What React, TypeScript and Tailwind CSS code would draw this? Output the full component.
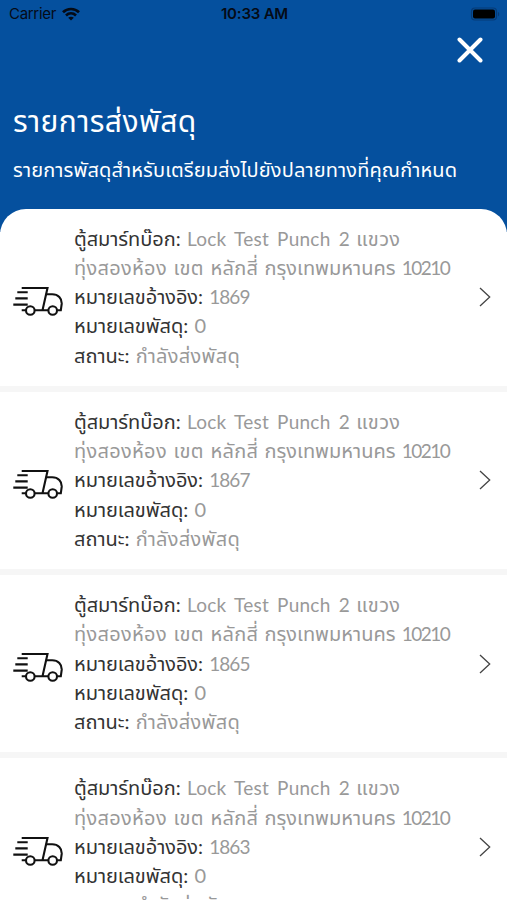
import React from "react";

const parcels = [
  { ref: "1869", parcel: "0" },
  { ref: "1867", parcel: "0" },
  { ref: "1865", parcel: "0" },
  { ref: "1863", parcel: "0" },
];

function WifiIcon() {
  return (
    <svg viewBox="0 0 18 14" className="w-[18px] h-[14px]" fill="none" stroke="#050b16" strokeWidth="2.7">
      <path d="M1 5.2C5.4 .9 12.6 .9 17 5.2" />
      <path d="M4 8.4C6.9 5.700 11.1 5.700 14 8.4" />
      <path d="M9 13.6 6.2 10.8C7.8 9.4 10.2 9.4 11.8 10.8Z" fill="#050b16" stroke="none" />
    </svg>
  );
}

function BatteryIcon() {
  return (
    <svg viewBox="0 0 30 14" className="w-[30px] h-[14px]">
      <rect x="1.500" y="1" width="25" height="12" rx="3.5" fill="none" stroke="#073b77" strokeWidth="1.2" />
      <rect x="3" y="2.500" width="22" height="9" rx="2" fill="#000" />
      <path d="M28 5v4.200c1.600-.5 1.600-3.700 0-4.200Z" fill="#073b77" />
    </svg>
  );
}

function TruckIcon() {
  return (
    <svg viewBox="0 0 50 32" className="w-[50px] h-8 mt-[7px]" fill="none" stroke="#111" strokeWidth="2.1">
      <path d="M8.700 3h25.800L29.500 25.300M4.300 7.200h10.400M2.300 13.400h12.400M.3 19.600h14.400M8.700 25.300h4.200M21.700 25.300H35" />
      <path d="M32.800 9.300h6.400c6 0 9.800 4.200 9.500 9.600L47.800 25.300h-3.600" />
      <circle cx="17.300" cy="25.500" r="4.300" />
      <circle cx="39.700" cy="25.500" r="4.300" />
    </svg>
  );
}

function Line({ label, children }: { label: string; children: React.ReactNode }) {
  return (
    <p>
      <span className="text-[#333] tracking-[-0.05px]">{label}:</span> {children}
    </p>
  );
}

export default function App() {
  return (
    <div className="h-[900px] overflow-hidden bg-white font-[Lato,'Noto_Sans_Thai',sans-serif]">
      <header className="bg-[#05509e] h-[232px] text-white">
        <div className="grid grid-cols-3 items-center h-7 pl-[9px] pr-[7px] text-[#050b16] font-[Inter,sans-serif] text-[15px]">
          <div className="flex items-center gap-[6px]">
            <span className="tracking-[-0.3px]">Carrier</span>
            <WifiIcon />
          </div>
          <span className="text-center font-semibold tracking-[-0.2px]">10:33 AM</span>
          <div className="flex justify-end">
            <BatteryIcon />
          </div>
        </div>
        <div className="flex justify-end pr-6 pt-[9px]">
          <svg viewBox="0 0 26 26" className="w-[26px] h-[26px]" stroke="#fff" strokeWidth="4" strokeLinecap="round">
            <path d="M2.500 2.500 23.500 23.500M23.500 2.500 2.500 23.500" />
          </svg>
        </div>
        <h1 className="mt-[37px] pl-[13px] h-10 leading-10 text-[30px] tracking-[0.4px] whitespace-nowrap">รายการส่งพัสดุ</h1>
        <p className="mt-[14px] pl-[13px] h-[30px] leading-[30px] text-[20px] tracking-[0.13px] whitespace-nowrap">
          รายการพัสดุสำหรับเตรียมส่งไปยังปลายทางที่คุณกำหนด
        </p>
      </header>

      <main className="relative -mt-[23.500px] rounded-t-[26px] bg-white overflow-hidden">
        {parcels.map((item) => (
          <div
            key={item.ref}
            className="flex items-center h-[183.300px] pl-[13px] pr-4 border-b-6 border-[#f6f6f6]"
          >
            <TruckIcon />
            <div className="flex-1 ml-[11px] pb-[1px] text-[20px] leading-[29.250px] [word-spacing:1.200px] text-[#999] whitespace-nowrap">
              <Line label="ตู้สมาร์ทบ๊อก">
                <span className="text-[19px] tracking-[0.25px] [word-spacing:3px]">Lock Test Punch 2</span>{" "}
                <span className="tracking-[0.4px]">แขวง</span>
              </Line>
              <p>
                <span className="tracking-[0.3px]">ทุ่งสองห้อง เขต หลักสี่</span> กรุงเทพมหานคร{" "}
                <span className="text-[19px] tracking-[-1.500px]">10210</span>
              </p>
              <Line label="หมายเลขอ้างอิง">
                <span className="text-[19px] tracking-[-1px]">{item.ref}</span>
              </Line>
              <Line label="หมายเลขพัสดุ">
                <span className="text-[20px]">{item.parcel}</span>
              </Line>
              <Line label="สถานะ">
                <span className="tracking-[0.3px]">กำลังส่งพัสดุ</span>
              </Line>
            </div>
            <svg viewBox="0 0 12 20" className="w-3 h-5" fill="none" stroke="#444" strokeWidth="1.300">
              <path d="M1 1l9.700 9L1 19" />
            </svg>
          </div>
        ))}
      </main>
    </div>
  );
}
